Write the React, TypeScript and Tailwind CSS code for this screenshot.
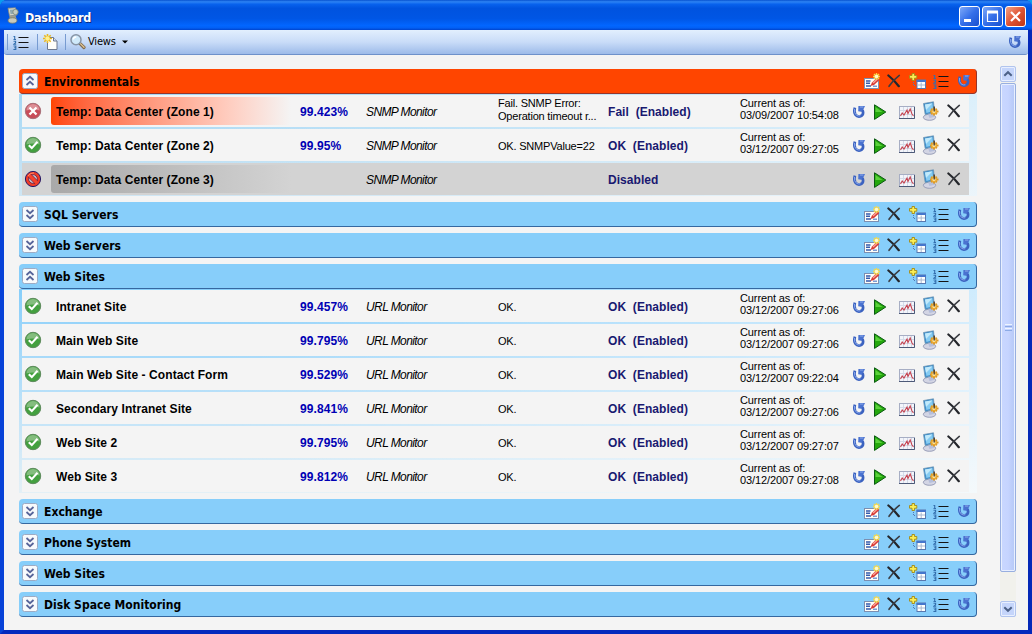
import React from "react";

type Tone = "fail" | "ok" | "disabled";

interface Monitor {
  name: string;
  tone: Tone;
  uptime?: string;
  type: string;
  message?: string[];
  status: string;
  checked?: string;
}

interface Group {
  title: string;
  alert?: boolean;
  monitors?: Monitor[];
}

const site = (name: string, uptime: string, time: string): Monitor => ({
  name,
  tone: "ok",
  uptime,
  type: "URL Monitor",
  message: ["OK."],
  status: "OK  (Enabled)",
  checked: "03/12/2007 " + time,
});

const groups: Group[] = [
  {
    title: "Environmentals",
    alert: true,
    monitors: [
      { name: "Temp: Data Center (Zone 1)", tone: "fail", uptime: "99.423%", type: "SNMP Monitor", message: ["Fail. SNMP Error:", "Operation timeout r..."], status: "Fail  (Enabled)", checked: "03/09/2007 10:54:08" },
      { name: "Temp: Data Center (Zone 2)", tone: "ok", uptime: "99.95%", type: "SNMP Monitor", message: ["OK. SNMPValue=22"], status: "OK  (Enabled)", checked: "03/12/2007 09:27:05" },
      { name: "Temp: Data Center (Zone 3)", tone: "disabled", type: "SNMP Monitor", status: "Disabled" },
    ],
  },
  { title: "SQL Servers" },
  { title: "Web Servers" },
  {
    title: "Web Sites",
    monitors: [
      site("Intranet Site", "99.457%", "09:27:06"),
      site("Main Web Site", "99.795%", "09:27:06"),
      site("Main Web Site - Contact Form", "99.529%", "09:22:04"),
      site("Secondary Intranet Site", "99.841%", "09:27:06"),
      site("Web Site 2", "99.795%", "09:27:07"),
      site("Web Site 3", "99.812%", "09:27:08"),
    ],
  },
  { title: "Exchange" },
  { title: "Phone System" },
  { title: "Web Sites" },
  { title: "Disk Space Monitoring" },
];

function Refresh() {
  return (
    <svg width="14" height="14" viewBox="0 0 14 14" className="shrink-0">
      <path d="M2.9 2.6Q1.6 7 3.4 9.6Q5.2 12 8 11.4Q11.3 10.6 11.1 7.4Q10.9 4.6 8.6 4.6" fill="none" stroke="#3b62c0" strokeWidth="2.7" />
      <path d="M2.5 4Q2 8 4 9.8Q6 11.6 8.4 10.8" fill="none" stroke="#86a5ea" strokeWidth="1" />
      <path d="M6.4 1H13L11.8 3.6L9.3 6.8L6.2 6.2Z" fill="#4a72d0" />
      <path d="M8 2H11.4" stroke="#8fabe9" />
    </svg>
  );
}

function Cross() {
  return (
    <svg width="14" height="14" viewBox="0 0 14 14" className="shrink-0">
      <path d="M1.4 1.5Q6.5 5.5 11.8 12.2" fill="none" stroke="#24262b" strokeWidth="2.2" strokeLinecap="round" />
      <path d="M12.3 1.4Q6.5 5.8 2 12.3" fill="none" stroke="#3a3c42" strokeWidth="1.6" strokeLinecap="round" />
    </svg>
  );
}

function Play() {
  return (
    <svg width="14" height="16" viewBox="0 0 14 16" className="shrink-0">
      <path d="M1.5 .8L12.8 8L1.5 15.4Z" fill="#25a80d" stroke="#0b5a12" />
      <path d="M2.5 3V8H9.5Z" fill="#5bd23c" />
    </svg>
  );
}

function Chart() {
  return (
    <svg width="16" height="14" viewBox="0 0 16 14" className="shrink-0">
      <rect x=".5" y=".5" width="15" height="12" fill="#f3f5fb" stroke="#a7aec4" />
      <path d="M15.5 1V12.5H0" fill="none" stroke="#4d5a78" />
      <path d="M1 4.5H15M1 8.5H15M4.5 1V12M8.5 1V12M12.5 1V12" stroke="#d5dbe8" />
      <path d="M1.5 10L3.2 7L5 9L8 4L9 7.5L11.2 3L13 8L14.5 10" fill="none" stroke="#c64350" strokeWidth="1.1" />
    </svg>
  );
}

function ServerConfig() {
  return (
    <svg width="18" height="20" viewBox="0 0 18 20" className="shrink-0">
      <ellipse cx="7.5" cy="16.3" rx="6.2" ry="3" fill="#d3d5e4" stroke="#9297b2" strokeWidth=".9" />
      <path d="M6 13L12 12.5L12.8 15.8L7.5 17Z" fill="#b6bfdb" />
      <path d="M1.5 2.5L11.5 .8L12.5 11.4L3.2 13.6Z" fill="#3b8dcd" stroke="#7097b4" strokeWidth=".8" />
      <path d="M3 3.6L10.5 2.2L11.2 10.2L4.4 12Z" fill="#86ccf2" />
      <path d="M3 3.6L10.5 2.2L4 9Z" fill="#c2eafb" />
      <path d="M12 6.5V14.5M8 10.5H16.5M9.2 7.7L14.8 13.3M14.8 7.7L9.2 13.3" stroke="#de9a24" strokeWidth="2" />
      <circle cx="12" cy="10.5" r="2.2" fill="#ffe69b" stroke="#e9a832" strokeWidth="1.2" />
      <path d="M12.2 5.5V10.5" stroke="#3d3430" strokeWidth="1.3" />
    </svg>
  );
}

function Edit() {
  return (
    <svg width="17" height="16" viewBox="0 0 17 16" className="shrink-0">
      <rect x=".5" y="5.5" width="14" height="10" fill="#fffef8" stroke="#7c8fb1" />
      <path d="M2 8H6.5M2 10.3H6M2 13H7" stroke="#345bad" strokeWidth="1.4" />
      <path d="M9 13.2H13" stroke="#6489cf" strokeWidth="1.3" />
      <path d="M6.4 13L8 9.5L13 4.8L15.4 7L10 12Z" fill="#d93a34" />
      <path d="M9 10L13.4 6" stroke="#f6a69a" strokeWidth="1.3" />
      <path d="M12.5 0V7M9 3.5H16M10 1L15 6M15 1L10 6" stroke="#f6d848" strokeWidth="1.4" />
      <circle cx="12.5" cy="3.5" r="1.8" fill="#fffbcb" />
    </svg>
  );
}

function AddTable() {
  return (
    <svg width="17" height="16" viewBox="0 0 17 16" className="shrink-0">
      <path d="M3 .5H5.5V2.5H7.8V5.2H5.5V7.5H3V5.2H.5V2.5H3Z" fill="#fbee55" stroke="#a58a13" strokeWidth=".9" />
      <path d="M4.5 9V12.5H7" fill="none" stroke="#5277b6" strokeDasharray="1 1" />
      <rect x="8" y="7" width="8.5" height="8.5" fill="#fff" stroke="#5878af" />
      <path d="M7.5 8H17" stroke="#4576cc" strokeWidth="2" />
      <path d="M8.5 12H16M12.2 9.5V15" stroke="#a9b8cf" />
    </svg>
  );
}

function NumberedList() {
  return (
    <svg width="16" height="15" viewBox="0 0 16 15" className="shrink-0">
      <path d="M5.5 2.5H15.5M5.5 7.5H15.5M5.5 12.5H15.5" stroke="#141414" />
      <path d="M1.7 1V4.3M.5 1.5H2M.5 4.5H3M.5 6.2H2.6V7.8L.8 9.2H3.2M.5 11H2.8V12.8H1.2M2.8 12.8V14.5H.4" fill="none" stroke="#346fae" strokeWidth="1.1" />
    </svg>
  );
}

function NewPage() {
  return (
    <svg width="16" height="17" viewBox="0 0 16 17">
      <path d="M4.5 3.5H10.5L14 7V15.5H4.5Z" fill="#fffefa" stroke="#6c7890" />
      <path d="M10.5 3.5V7H14" fill="#d3dff0" stroke="#6c7890" />
      <path d="M4.5 0V9M0 4.5H9M1.3 1.3L7.7 7.7M7.7 1.3L1.3 7.7" stroke="#e9b822" strokeWidth="1.6" />
      <circle cx="4.5" cy="4.5" r="2.2" fill="#fff08b" />
    </svg>
  );
}

function Magnifier() {
  return (
    <svg width="16" height="16" viewBox="0 0 16 16">
      <path d="M9.8 9.4L14 13.5" stroke="#806b4f" strokeWidth="3.2" strokeLinecap="round" />
      <path d="M10.4 9.6L14 13.2" stroke="#e0c697" strokeWidth="1.3" strokeLinecap="round" />
      <circle cx="6" cy="5.8" r="5" fill="#cfe9fa" stroke="#8794a5" strokeWidth="1.5" />
      <path d="M3.3 5.5A2.8 2.8 0 0 1 6.3 3" fill="none" stroke="white" strokeWidth="1.4" />
    </svg>
  );
}

function AppIcon() {
  return (
    <svg width="14" height="17" viewBox="0 0 14 17">
      <path d="M2 1.2L9.5 .8L11 8L3.5 9Z" fill="#d6d7c9" stroke="#8b8e80" strokeWidth=".8" />
      <path d="M3.8 2.8L8 2.4L8.8 6.6L4.6 7.2Z" fill="#8fa9b0" />
      <circle cx="9.5" cy="5" r="2.7" fill="#c3ccc0" stroke="#76847b" strokeWidth=".8" />
      <path d="M3.5 9L9.5 8.2L10.5 12L3.5 13Z" fill="#9d9f90" />
      <ellipse cx="6.5" cy="13.5" rx="4.4" ry="2.7" fill="#c9cabb" stroke="#747869" strokeWidth=".8" />
    </svg>
  );
}

function StatusIcon({ tone }: { tone: Tone }) {
  if (tone === "disabled") {
    return (
      <svg width="18" height="18" viewBox="0 0 18 18">
        <circle cx="9" cy="9" r="7.6" fill="#f03c28" stroke="#251965" />
        <circle cx="9" cy="9" r="4.4" fill="#c4b6c4" stroke="#5c1438" strokeWidth=".7" />
        <path d="M5.5 5.5L12.5 12.5" stroke="#6c1838" strokeWidth="4.4" />
        <path d="M5 5L13 13" stroke="#f4442e" strokeWidth="3.4" />
        <path d="M4 6Q6 2.7 10 2.9" fill="none" stroke="#ff8e6a" />
      </svg>
    );
  }
  const ok = tone === "ok";
  return (
    <svg width="18" height="18" viewBox="0 0 18 18">
      <circle cx="9" cy="9" r="7.7" fill={ok ? "#43a03f" : "#c84c58"} stroke={ok ? "#5d8a5c" : "#a87078"} />
      <path d="M2.4 8.5A6.6 6.6 0 0 1 15.6 8.5Q9 6.5 2.4 8.5Z" fill={ok ? "#84bd7e" : "#dc8f96"} />
      {ok ? (
        <path d="M4.8 9.2L7.8 12.1L13.5 5.8" fill="none" stroke="white" strokeWidth="2.1" />
      ) : (
        <path d="M5.5 5.5L12.5 12.5M12.5 5.5L5.5 12.5" stroke="white" strokeWidth="2.3" />
      )}
    </svg>
  );
}

function Expander({ open }: { open: boolean }) {
  return (
    <svg width="16" height="16" viewBox="0 0 16 16" className="shrink-0">
      <rect x=".5" y=".5" width="15" height="15" rx="2" fill="#f8fafc" stroke="#9dabc4" />
      <path
        d={open ? "M4.5 7L8 3.8L11.5 7M4.5 12L8 8.8L11.5 12" : "M4.5 4L8 7.2L11.5 4M4.5 9L8 12.2L11.5 9"}
        fill="none"
        stroke="#576499"
        strokeWidth="1.8"
      />
    </svg>
  );
}

function GroupHeader({ group }: { group: Group }) {
  const color = group.alert ? "bg-[#ff4500] border-[#96352a]" : "bg-[#87cefa] border-[#3568a0]";
  return (
    <div className={"flex h-[25px] shrink-0 items-center rounded-[4px] border-r border-b pr-[5px] pl-[3px] " + color}>
      <Expander open={!!group.monitors} />
      <span className="ml-[6px] grow pt-px font-['DejaVu_Sans_Condensed',sans-serif] text-[12px] leading-4 font-bold tracking-[0.02px] text-black">
        {group.title}
      </span>
      <span className="mr-[6px] flex"><Edit /></span>
      <span className="mr-[8px] flex pb-px"><Cross /></span>
      <span className="mr-[7px] flex"><AddTable /></span>
      <span className="mr-[8px] flex"><NumberedList /></span>
      <Refresh />
    </div>
  );
}

const nameFill: Record<Tone, string> = {
  fail: "bg-linear-to-r from-[#ff4500] to-[#f4f4f4]",
  ok: "",
  disabled: "bg-linear-to-r from-[#a9a9a9] to-[#d3d3d3]",
};

function MonitorRow({ m }: { m: Monitor }) {
  return (
    <div className={"flex h-8 items-center text-black " + (m.tone === "disabled" ? "bg-[#d3d3d3]" : "bg-[#f4f4f4]")}>
      <div className="flex w-[29px] shrink-0 pl-[2px]"><StatusIcon tone={m.tone} /></div>
      <div className={"mr-[9px] flex h-[28px] w-[240px] shrink-0 items-center rounded-[3px] pt-[2px] pl-[5px] text-[12px] font-bold tracking-[0.08px] whitespace-nowrap " + nameFill[m.tone]}>
        {m.name}
      </div>
      <div className="w-[66px] shrink-0 pt-[2px] text-[12px] font-bold tracking-[0.1px] text-[#0000b4]">{m.uptime}</div>
      <div className="w-[132px] shrink-0 pt-[2px] text-[12px] tracking-[-0.6px] italic">{m.type}</div>
      <div className={"w-[110px] shrink-0 text-[11px] leading-[13px] tracking-[-0.2px] whitespace-nowrap " + (m.message && m.message.length > 1 ? "pb-[3px]" : "pt-[2px]")}>
        {m.message?.map((line) => <div key={line}>{line}</div>)}
      </div>
      <div className="w-[132px] shrink-0 pt-[2px] text-[12px] font-bold tracking-[0.05px] whitespace-pre text-[#191970]">{m.status}</div>
      <div className="w-[111px] shrink-0 pb-[4px] text-[11px] leading-[12px] tracking-[-0.11px] whitespace-nowrap">
        {m.checked && (
          <>
            <div>Current as of:</div>
            <div>{m.checked}</div>
          </>
        )}
      </div>
      <div className="flex items-center">
        <span className="mr-[7px] ml-px flex pt-[2px]"><Refresh /></span>
        <span className="mr-[12px] flex pt-[2px]"><Play /></span>
        <span className="mr-[7px] flex pt-[3px]"><Chart /></span>
        <span className="mr-[7px] flex"><ServerConfig /></span>
        <span className="flex pb-px"><Cross /></span>
      </div>
    </div>
  );
}

function GroupPanel({ group }: { group: Group }) {
  return (
    <section className="flex flex-col">
      <GroupHeader group={group} />
      {group.monitors && (
        <div className={"bg-linear-to-b " + (group.alert ? "from-[#a5d8f5] to-[#cfe6f4]" : "from-[#87cefa] to-[#e4f0f6]")}>
          <div className="flex flex-col gap-[2px] bg-linear-to-r from-transparent from-20% to-white/60 py-px pr-2 pl-[3px]">
            {group.monitors.map((m) => <MonitorRow key={m.name} m={m} />)}
          </div>
        </div>
      )}
    </section>
  );
}

function WindowButton({ kind }: { kind: "min" | "max" | "close" }) {
  const fill = kind === "close" ? "from-[#f1a084] via-[#df5434] to-[#bf3515]" : "from-[#7ea8f8] via-[#356fe9] to-[#1950cf]";
  return (
    <button className={"flex size-[21px] items-center justify-center rounded-[3px] border border-white bg-linear-to-br " + fill}>
      <svg width="19" height="19" viewBox="0 0 19 19">
        {kind === "min" && <path d="M4 13.5H11" stroke="white" strokeWidth="3" />}
        {kind === "max" && <path d="M4.5 5V14.5H14.5V5M3.9 5H15.1" fill="none" stroke="white" strokeWidth="1.2" />}
        {kind === "max" && <path d="M4 5H15" stroke="white" strokeWidth="3" />}
        {kind === "close" && <path d="M5 5L14 14M14 5L5 14" stroke="white" strokeWidth="2.2" />}
      </svg>
    </button>
  );
}

function ScrollArrow({ up }: { up?: boolean }) {
  return (
    <div className="flex size-4 shrink-0 items-center justify-center rounded-[2px] border border-[#b1c4ee] bg-[#c5d5fb] shadow-[inset_0_0_0_1px_#e8efff]">
      <svg width="10" height="8" viewBox="0 0 10 8">
        <path d={up ? "M1.3 5.8L5 2.2L8.7 5.8" : "M1.3 2.2L5 5.8L8.7 2.2"} fill="none" stroke="#4c6188" strokeWidth="2" />
      </svg>
    </div>
  );
}

export default function App() {
  return (
    <div className="h-[634px] w-[1032px] overflow-hidden bg-[#0a9cf0] font-['Liberation_Sans',Arial,sans-serif]">
      <div className="flex h-full flex-col overflow-hidden rounded-t-[7px] bg-[#0842d8]">
        <header className="flex h-[30px] shrink-0 items-center bg-[linear-gradient(180deg,#0752cf_0%,#2d83f4_6%,#0862ed_14%,#0053df_28%,#0056e5_62%,#0266ff_85%,#0260f5_93%,#0043cc_100%)] pr-[6px] pl-[6px]">
          <AppIcon />
          <h1 className="ml-[5px] grow pt-[5px] font-['DejaVu_Sans_Condensed',sans-serif] text-[12.5px] leading-4 font-bold tracking-[-0.3px] text-white [text-shadow:1px_1px_#0a2b87]">
            Dashboard
          </h1>
          <div className="flex gap-[2px] pt-[3px]">
            <WindowButton kind="min" />
            <WindowButton kind="max" />
            <WindowButton kind="close" />
          </div>
        </header>
        <div className="flex grow flex-col border-x-4 border-t-0 border-b-4 border-[#0842d8] border-r-[#0428b8] border-b-[#0429bd] bg-[#0842d8]">
          <div className="flex grow flex-col bg-[#f4f4f4]">
            <nav className="flex h-[25px] shrink-0 items-center rounded-b-[3px] border-b border-[#6e91ca] bg-linear-to-b from-[#e2effe] via-[#c9dcf8] to-[#9dbbe9] pr-[6px] pl-[3px]">
              <div className="h-4 w-px bg-[#779bd1]" />
              <span className="ml-[5px] flex"><NumberedList /></span>
              <div className="ml-[8px] h-4 w-px bg-[#779bd1]" />
              <span className="ml-[5px] flex"><NewPage /></span>
              <div className="ml-[6px] h-4 w-px bg-[#779bd1]" />
              <span className="ml-[4px] flex"><Magnifier /></span>
              <span className="ml-[2px] pt-px font-['DejaVu_Sans_Condensed',sans-serif] text-[11px] tracking-[-0.2px] text-black">Views</span>
              <svg width="6" height="4" viewBox="0 0 6 4" className="ml-[6px]"><path d="M0 .5H6L3 3.5Z" fill="black" /></svg>
              <span className="grow" />
              <Refresh />
            </nav>
            <div className="flex grow pr-3 pl-[15px]">
              <main className="flex w-[958px] shrink-0 flex-col gap-[6px] pt-[14px]">
                {groups.map((g, i) => <GroupPanel key={i} group={g} />)}
              </main>
              <aside className="mt-[11px] mb-[13px] ml-auto flex w-4 flex-col bg-[#f1f1ec]">
                <ScrollArrow up />
                <div className="mt-px flex h-[489px] shrink-0 flex-col items-center justify-center gap-px rounded-[2px] border border-[#98afe0] bg-linear-to-r from-[#c9d7ff] via-[#c6d4ff] to-[#b5c8f6] shadow-[inset_0_0_0_1px_#e8efff]">
                  <div className="h-px w-[7px] bg-[#edf4ff]" />
                  <div className="h-px w-[7px] bg-[#8caae6]" />
                  <div className="h-px w-[7px] bg-[#edf4ff]" />
                  <div className="h-px w-[7px] bg-[#8caae6]" />
                </div>
                <div className="grow" />
                <ScrollArrow />
              </aside>
            </div>
          </div>
        </div>
      </div>
    </div>
  );
}
